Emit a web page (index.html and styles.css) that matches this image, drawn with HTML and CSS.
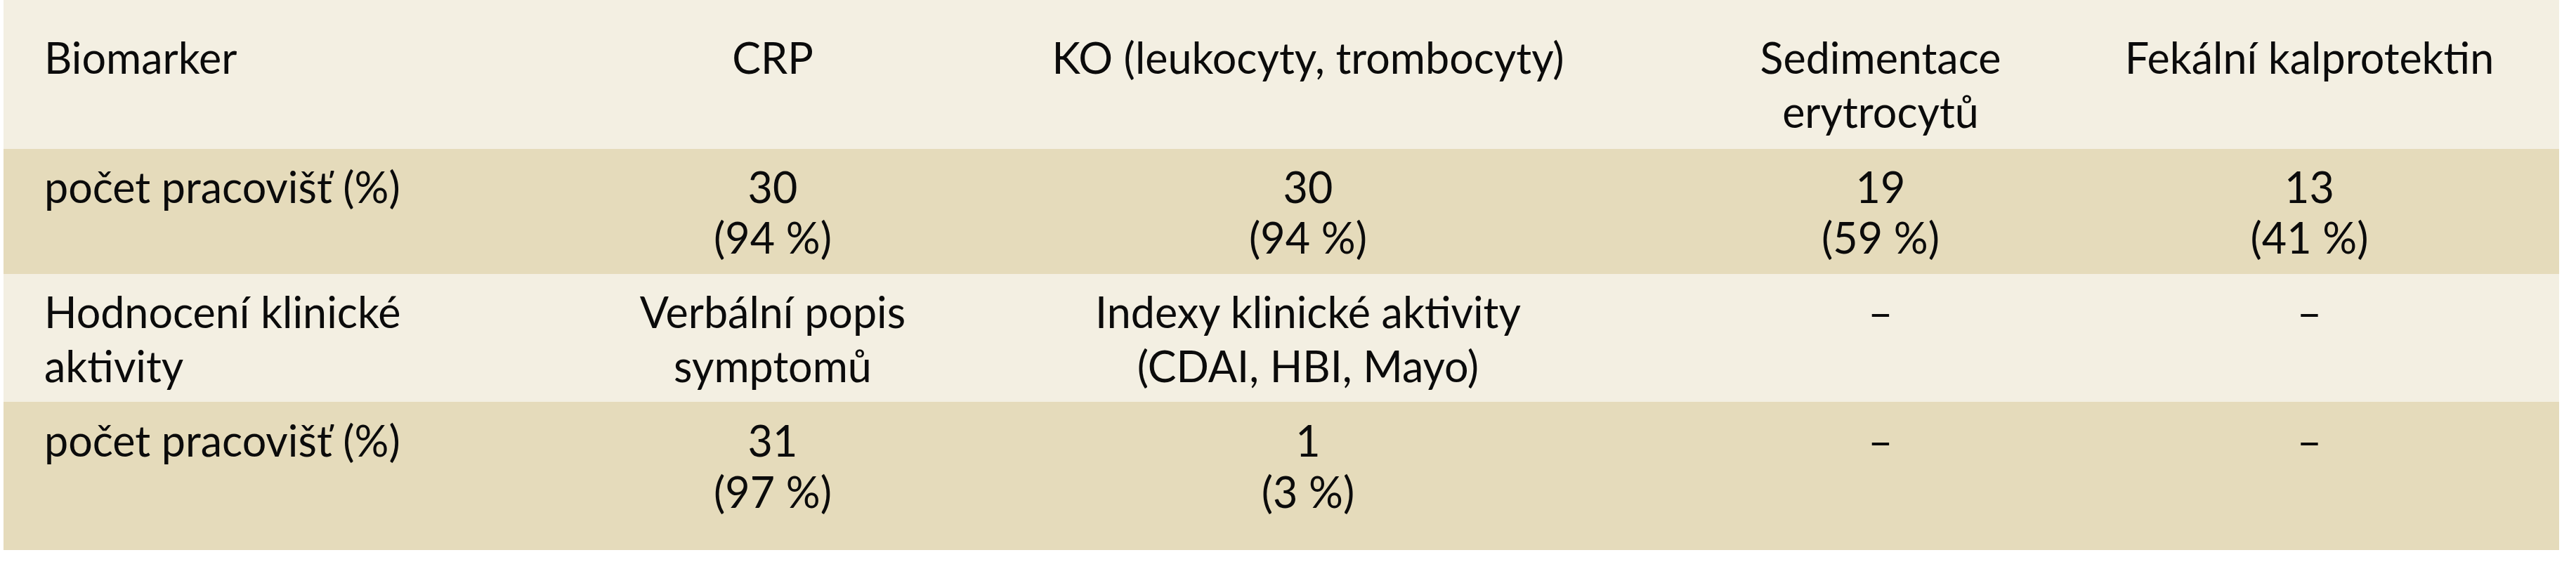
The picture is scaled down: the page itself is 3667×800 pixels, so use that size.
FILE: index.html
```html
<!DOCTYPE html>
<html lang="cs">
<head>
<meta charset="utf-8">
<title>Biomarkery</title>
<link rel="stylesheet" href="styles.css">
</head>
<body>
<table class="data">
  <colgroup>
    <col class="c1"><col class="c2"><col class="c3"><col class="c4"><col class="c5">
  </colgroup>
  <tr class="row head">
    <td class="label">Biomarker</td>
    <td>CRP</td>
    <td>KO (leukocyty, trombocyty)</td>
    <td>Sedimentace<br>erytrocytů</td>
    <td>Fekální kalprotektin</td>
  </tr>
  <tr class="row num">
    <td class="label">počet pracovišť (%)</td>
    <td>30<br>(94 %)</td>
    <td>30<br>(94 %)</td>
    <td>19<br>(59 %)</td>
    <td>13<br>(41 %)</td>
  </tr>
  <tr class="row sub">
    <td class="label">Hodnocení klinické<br>aktivity</td>
    <td>Verbální popis<br>symptomů</td>
    <td>Indexy klinické aktivity<br>(CDAI, HBI, Mayo)</td>
    <td>–</td>
    <td>–</td>
  </tr>
  <tr class="row num last">
    <td class="label">počet pracovišť (%)</td>
    <td>31<br>(97 %)</td>
    <td>1<br>(3 %)</td>
    <td>–</td>
    <td>–</td>
  </tr>
</table>
</body>
</html>
```

FILE: styles.css
```css
html, body {
  margin: 0;
  padding: 0;
  background: #ffffff;
}

.data {
  margin-left: 5px;
  width: 3638px;
  table-layout: fixed;
  border-collapse: collapse;
  border-spacing: 0;
  font-family: Lato, "Noto Sans", sans-serif;
  font-size: 61px;
  color: #0b0b0b;
}

.c1 { width: 893px; }
.c2 { width: 404px; }
.c3 { width: 1120px; }
.c4 { width: 510px; }
.c5 { width: 711px; }

.data td {
  vertical-align: top;
  text-align: center;
  white-space: nowrap;
  padding: 0;
}

.data td.label {
  text-align: left;
  padding-left: 58px;
}

.head td {
  background: #f3efe2;
  line-height: 77px;
  padding-top: 43px;
  padding-bottom: 15px;
  height: 154px;
}

.num td {
  background: #e5dbbb;
  line-height: 72px;
  padding-top: 18px;
  padding-bottom: 15px;
  height: 145px;
}

.sub td {
  background: #f3efe2;
  line-height: 77px;
  padding-top: 15px;
  padding-bottom: 13px;
  height: 154px;
}

.num.last td {
  line-height: 73px;
  padding-top: 18px;
  padding-bottom: 47px;
  height: 146px;
}
```
